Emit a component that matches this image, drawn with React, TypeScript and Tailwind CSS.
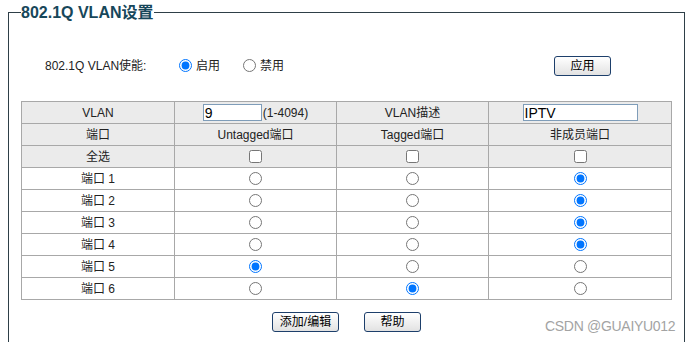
import React from "react";

const ports = [
  { name: "端口 1", sel: 2 },
  { name: "端口 2", sel: 2 },
  { name: "端口 3", sel: 2 },
  { name: "端口 4", sel: 2 },
  { name: "端口 5", sel: 0 },
  { name: "端口 6", sel: 1 },
];

const font = { fontFamily: '"Liberation Sans", Arial, "Noto Sans CJK SC", sans-serif' };

const btn =
  "h-[20px] border border-[#1d3f6b] rounded-[3px] bg-gradient-to-b from-white to-[#e2e2e2] text-[12px] text-black leading-none";

const App = () => {
  return (
    <div className="relative w-[692px] h-[342px] overflow-hidden bg-white text-[#222]" style={font}>
      <fieldset className="ml-2 mt-[3px] w-[676px] h-[360px] border border-[#2e3f48] px-3">
        <legend className="p-0 text-[16px] leading-[19px] font-bold text-[#17475a]">802.1Q VLAN设置</legend>

        {/* enable row */}
        <div className="mt-[34px] h-[19px] flex items-center text-[12px]">
          <span className="ml-[24px] w-[134px]">802.1Q VLAN使能:</span>
          <input type="radio" name="en" defaultChecked className="m-0 w-[13px] h-[13px]" />
          <span className="ml-[4px]">启用</span>
          <input type="radio" name="en" className="ml-[23px] m-0 w-[13px] h-[13px]" />
          <span className="ml-[4px]">禁用</span>
          <button className={`${btn} ml-auto mr-[61px] w-[57px] h-[19px]`}>应用</button>
        </div>

        <table className="mt-[26px] w-[650px] table-fixed border-collapse text-[12px] text-center">
          <colgroup>
            <col className="w-[153px]" />
            <col className="w-[162px]" />
            <col className="w-[152px]" />
            <col className="w-[183px]" />
          </colgroup>
          <tbody>
            <tr className="bg-[#ebebeb] h-[22px]">
              <td className="border border-[#a8a8a8] p-0">VLAN</td>
              <td className="border border-[#a8a8a8] p-0">
                <div className="flex items-center justify-center">
                  <input
                    defaultValue="9"
                    className="w-[59px] h-[17px] border border-[#7f9db9] bg-white px-[1px] text-[14px] leading-none text-black outline-none"
                  />
                  <span className="ml-[1px]">(1-4094)</span>
                </div>
              </td>
              <td className="border border-[#a8a8a8] p-0">VLAN描述</td>
              <td className="border border-[#a8a8a8] p-0">
                <div className="flex items-center justify-center">
                  <input
                    defaultValue="IPTV"
                    className="w-[115px] h-[17px] border border-[#7f9db9] bg-white px-[1px] text-[14px] leading-none text-black outline-none"
                  />
                </div>
              </td>
            </tr>
            <tr className="bg-[#ebebeb] h-[22px]">
              <td className="border border-[#a8a8a8] p-0">端口</td>
              <td className="border border-[#a8a8a8] p-0">Untagged端口</td>
              <td className="border border-[#a8a8a8] p-0">Tagged端口</td>
              <td className="border border-[#a8a8a8] p-0">非成员端口</td>
            </tr>
            <tr className="bg-[#ebebeb] h-[22px]">
              <td className="border border-[#a8a8a8] p-0">全选</td>
              {[0, 1, 2].map((i) => (
                <td key={i} className="border border-[#a8a8a8] p-0">
                  <div className="flex items-center justify-center">
                    <input type="checkbox" className="m-0 w-[13px] h-[13px]" />
                  </div>
                </td>
              ))}
            </tr>
            {ports.map((p, r) => (
              <tr key={p.name} className="bg-white h-[22px]">
                <td className="border border-[#a8a8a8] p-0">{p.name}</td>
                {[0, 1, 2].map((i) => (
                  <td key={i} className="border border-[#a8a8a8] p-0">
                    <div className="flex items-center justify-center">
                      <input
                        type="radio"
                        name={"p" + r}
                        defaultChecked={p.sel === i}
                        className="m-0 w-[13px] h-[13px]"
                      />
                    </div>
                  </td>
                ))}
              </tr>
            ))}
          </tbody>
        </table>

        <div className="mt-[12px] flex justify-center gap-[25px]">
          <button className={`${btn} w-[67px]`}>添加/编辑</button>
          <button className={`${btn} w-[57px]`}>帮助</button>
        </div>
      </fieldset>

      <span className="absolute left-[545px] top-[316px] text-[14px] leading-[20px] tracking-[-0.3px] text-[#a3a3a3]">CSDN @GUAIYU012</span>
    </div>
  );
};

export default App;
